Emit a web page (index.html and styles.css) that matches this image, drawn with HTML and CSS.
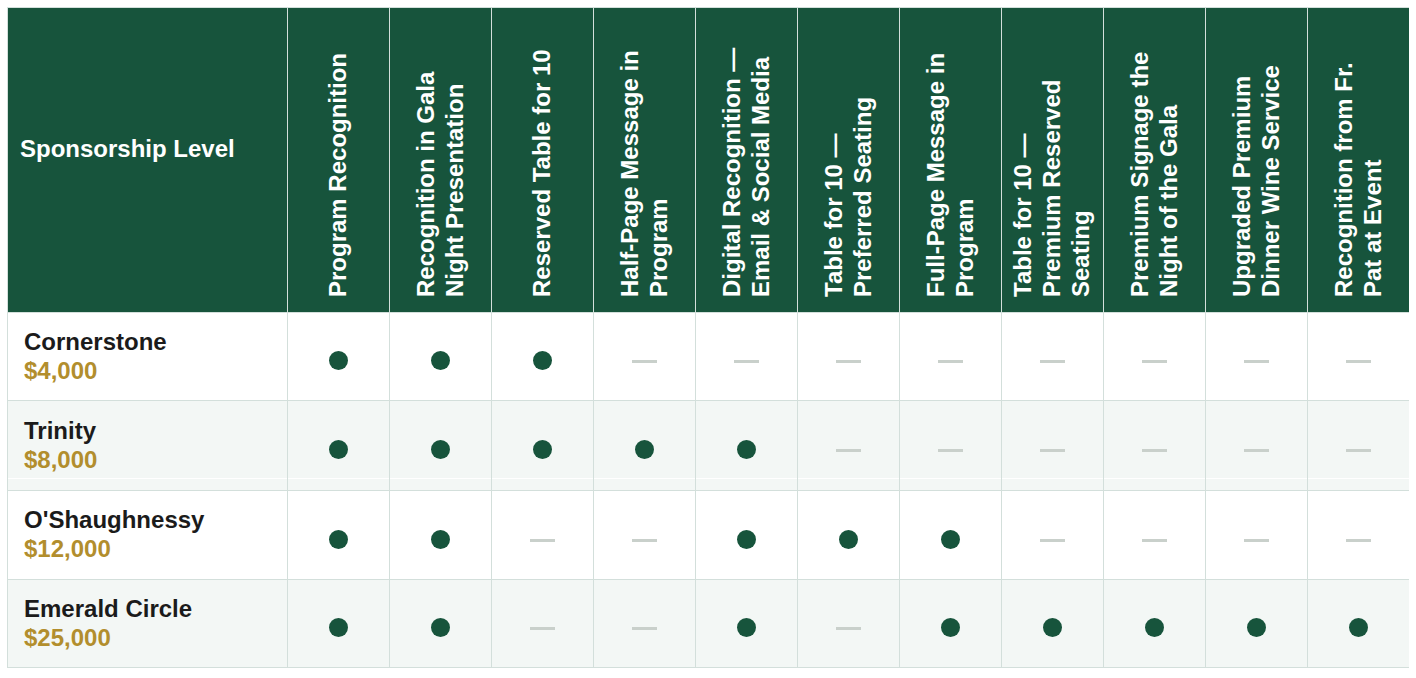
FILE: index.html
```html
<!DOCTYPE html>
<html lang="en">
<head>
<meta charset="utf-8">
<title>Sponsorship Levels</title>
<link rel="stylesheet" href="styles.css">
</head>
<body>
<table class="grid">
  <colgroup>
    <col class="col-level">
    <col class="col-benefit"><col class="col-benefit"><col class="col-benefit"><col class="col-benefit">
    <col class="col-benefit"><col class="col-benefit"><col class="col-benefit"><col class="col-benefit">
    <col class="col-benefit"><col class="col-benefit"><col class="col-benefit">
  </colgroup>
  <thead>
    <tr class="head-row">
      <th class="cell head-level">Sponsorship Level</th>
      <th class="cell head-benefit"><div class="vlabel">Program Recognition</div></th>
      <th class="cell head-benefit"><div class="vlabel">Recognition in Gala Night Presentation</div></th>
      <th class="cell head-benefit"><div class="vlabel">Reserved Table for 10</div></th>
      <th class="cell head-benefit"><div class="vlabel">Half-Page Message in Program</div></th>
      <th class="cell head-benefit"><div class="vlabel">Digital Recognition — Email &amp; Social Media</div></th>
      <th class="cell head-benefit"><div class="vlabel">Table for 10 — Preferred Seating</div></th>
      <th class="cell head-benefit"><div class="vlabel">Full-Page Message in Program</div></th>
      <th class="cell head-benefit"><div class="vlabel">Table for 10 — Premium Reserved Seating</div></th>
      <th class="cell head-benefit"><div class="vlabel">Premium Signage the Night of the Gala</div></th>
      <th class="cell head-benefit"><div class="vlabel">Upgraded Premium Dinner Wine Service</div></th>
      <th class="cell head-benefit"><div class="vlabel">Recognition from Fr. Pat at Event</div></th>
    </tr>
  </thead>
  <tbody>
    <tr class="row row-a">
      <td class="cell level"><div class="name">Cornerstone</div><div class="price">$4,000</div></td>
      <td class="cell mark"><span class="dot"></span></td>
      <td class="cell mark"><span class="dot"></span></td>
      <td class="cell mark"><span class="dot"></span></td>
      <td class="cell mark"><span class="dash"></span></td>
      <td class="cell mark"><span class="dash"></span></td>
      <td class="cell mark"><span class="dash"></span></td>
      <td class="cell mark"><span class="dash"></span></td>
      <td class="cell mark"><span class="dash"></span></td>
      <td class="cell mark"><span class="dash"></span></td>
      <td class="cell mark"><span class="dash"></span></td>
      <td class="cell mark"><span class="dash"></span></td>
    </tr>
    <tr class="row row-b row-tall">
      <td class="cell level"><div class="name">Trinity</div><div class="price">$8,000</div></td>
      <td class="cell mark"><span class="dot"></span></td>
      <td class="cell mark"><span class="dot"></span></td>
      <td class="cell mark"><span class="dot"></span></td>
      <td class="cell mark"><span class="dot"></span></td>
      <td class="cell mark"><span class="dot"></span></td>
      <td class="cell mark"><span class="dash"></span></td>
      <td class="cell mark"><span class="dash"></span></td>
      <td class="cell mark"><span class="dash"></span></td>
      <td class="cell mark"><span class="dash"></span></td>
      <td class="cell mark"><span class="dash"></span></td>
      <td class="cell mark"><span class="dash"></span></td>
    </tr>
    <tr class="row row-a row-mid">
      <td class="cell level"><div class="name">O'Shaughnessy</div><div class="price">$12,000</div></td>
      <td class="cell mark"><span class="dot"></span></td>
      <td class="cell mark"><span class="dot"></span></td>
      <td class="cell mark"><span class="dash"></span></td>
      <td class="cell mark"><span class="dash"></span></td>
      <td class="cell mark"><span class="dot"></span></td>
      <td class="cell mark"><span class="dot"></span></td>
      <td class="cell mark"><span class="dot"></span></td>
      <td class="cell mark"><span class="dash"></span></td>
      <td class="cell mark"><span class="dash"></span></td>
      <td class="cell mark"><span class="dash"></span></td>
      <td class="cell mark"><span class="dash"></span></td>
    </tr>
    <tr class="row row-b">
      <td class="cell level"><div class="name">Emerald Circle</div><div class="price">$25,000</div></td>
      <td class="cell mark"><span class="dot"></span></td>
      <td class="cell mark"><span class="dot"></span></td>
      <td class="cell mark"><span class="dash"></span></td>
      <td class="cell mark"><span class="dash"></span></td>
      <td class="cell mark"><span class="dot"></span></td>
      <td class="cell mark"><span class="dash"></span></td>
      <td class="cell mark"><span class="dot"></span></td>
      <td class="cell mark"><span class="dot"></span></td>
      <td class="cell mark"><span class="dot"></span></td>
      <td class="cell mark"><span class="dot"></span></td>
      <td class="cell mark"><span class="dot"></span></td>
    </tr>
  </tbody>
</table>
</body>
</html>
```
FILE: styles.css
```css
html, body {
  background: #ffffff;
}

body {
  margin: 7px;
  font-family: "Liberation Sans", Arial, sans-serif;
  font-size: 24px;
  line-height: 1.2;
  color: #1b1b1b;
}

.grid {
  border-collapse: separate;
  border-spacing: 0;
  table-layout: fixed;
  width: 1403px;
  border-top: 1px solid #d3dfdb;
  border-left: 1px solid #d3dfdb;
}

.col-level {
  width: 280px;
}

.col-benefit {
  width: 102px;
}

.cell {
  border-right: 1px solid #d3dfdb;
  border-bottom: 1px solid #d3dfdb;
  padding: 0;
}

.head-row {
  height: 305px;
}

.head-row .cell {
  background: #17543c;
  color: #ffffff;
  font-weight: 700;
}

.cell.head-level {
  text-align: left;
  vertical-align: middle;
  padding: 0 12px 22px 12px;
}

.cell.head-benefit {
  vertical-align: bottom;
  padding: 0 0 15px 0;
}

.vlabel {
  writing-mode: vertical-rl;
  transform: rotate(180deg);
  height: 262px;
  width: fit-content;
  margin: 0 auto;
  text-align: start;
  white-space: normal;
}

.row {
  height: 88px;
}

.row-tall {
  height: 90px;
}

.row-mid {
  height: 89px;
}

.row-a .cell {
  background: #ffffff;
}

.row-b .cell {
  background: #f3f7f5;
}

.row-tall .cell {
  background: linear-gradient(to bottom,
    #f3f7f5 0,
    #f3f7f5 calc(100% - 12px),
    #ffffff calc(100% - 12px),
    #ffffff calc(100% - 11px),
    #f3f7f5 calc(100% - 11px));
}

.cell.level {
  vertical-align: middle;
  padding: 0 16px;
  font-weight: 700;
}

.name {
  color: #1b1b1b;
}

.price {
  color: #b28e2d;
}

.cell.mark {
  text-align: center;
  vertical-align: middle;
}

.dot {
  display: block;
  width: 19px;
  height: 19px;
  margin: 8px auto 0;
  border-radius: 50%;
  background: #17543c;
}

.dash {
  display: block;
  width: 25px;
  height: 3px;
  margin: 10px auto 0;
  background: #c9d0cb;
}
```
